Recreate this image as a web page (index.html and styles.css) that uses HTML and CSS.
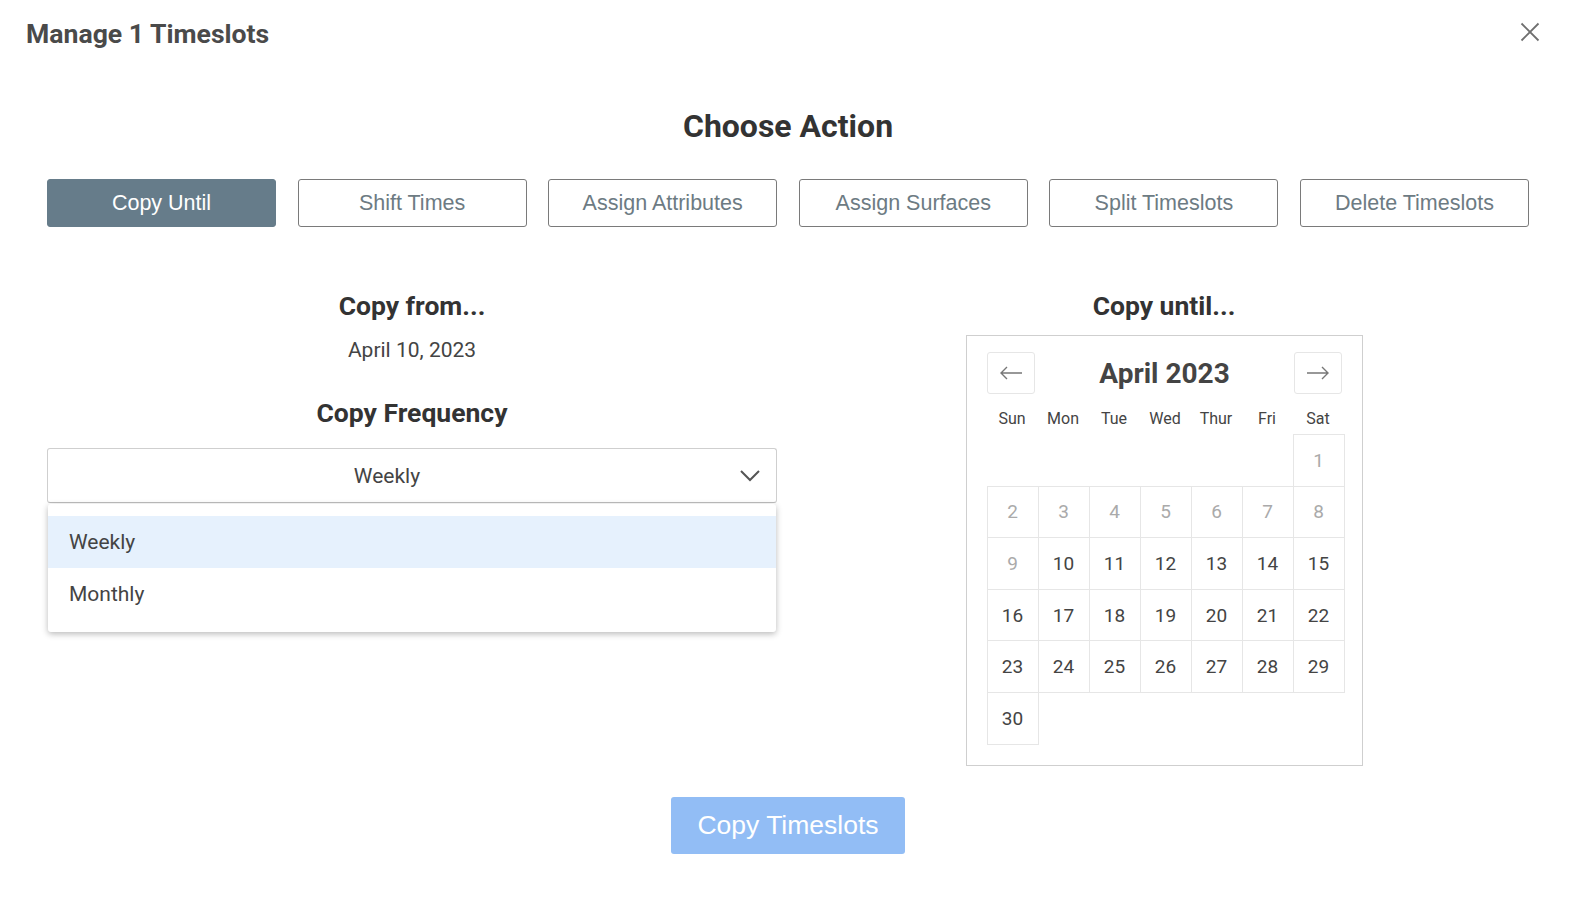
FILE: index.html
```html
<!DOCTYPE html>
<html lang="en">

<head>
  <meta charset="UTF-8" />
  <meta name="viewport" content="width=device-width, initial-scale=1.0" />
  <title>Manage 1 Timeslots</title>
  <link rel="stylesheet" href="styles.css">
</head>

<body>

  <div class="modal">
    <!-- Header -->
    <div class="modal-header">
      <h1>Manage 1 Timeslots</h1>
      <button class="close-btn" aria-label="Close">
        <svg width="20" height="20" viewBox="0 0 20 20">
          <path d="M1.5 1.5 L18.5 18.5 M18.5 1.5 L1.5 18.5" stroke="#6f6f6f" stroke-width="1.8" fill="none" />
        </svg>
      </button>
    </div>

    <h2 class="section-title">Choose Action</h2>

    <!-- Action buttons -->
    <div class="actions">
      <button class="action-btn active">Copy Until</button>
      <button class="action-btn">Shift Times</button>
      <button class="action-btn">Assign Attributes</button>
      <button class="action-btn">Assign Surfaces</button>
      <button class="action-btn">Split Timeslots</button>
      <button class="action-btn">Delete Timeslots</button>
    </div>

    <div class="columns">
      <!-- Left column -->
      <div class="col">
        <h3>Copy from...</h3>
        <p class="from-date">April 10, 2023</p>
        <h3 class="freq-title">Copy Frequency</h3>
        <div class="select-wrap">
          <div class="select">
            <span>Weekly</span>
            <svg class="chevron" width="20" height="12" viewBox="0 0 20 12">
              <path d="M1 1 L10 10 L19 1" stroke="#555" stroke-width="2" fill="none" />
            </svg>
          </div>
          <ul class="menu">
            <li class="selected">Weekly</li>
            <li>Monthly</li>
          </ul>
        </div>
      </div>

      <!-- Right column -->
      <div class="col">
        <h3>Copy until...</h3>
        <div class="calendar">
          <div class="cal-head">
            <button class="nav-btn" aria-label="Previous month">
              <svg width="24" height="14" viewBox="0 0 24 14">
                <path d="M23 7 H2 M8 1 L2 7 L8 13" stroke="#777" stroke-width="1.4" fill="none" />
              </svg>
            </button>
            <span class="month">April 2023</span>
            <button class="nav-btn" aria-label="Next month">
              <svg width="24" height="14" viewBox="0 0 24 14">
                <path d="M1 7 H22 M16 1 L22 7 L16 13" stroke="#777" stroke-width="1.4" fill="none" />
              </svg>
            </button>
          </div>
          <div class="weekdays">
            <span>Sun</span><span>Mon</span><span>Tue</span><span>Wed</span><span>Thur</span><span>Fri</span><span>Sat</span>
          </div>
          <div class="days" id="days"></div>
        </div>
      </div>
    </div>

    <div class="footer">
      <button class="submit-btn">Copy Timeslots</button>
    </div>
  </div>

  <script>
    const days = document.getElementById("days");
    const firstWeekday = 6;
    for (let i = 0; i < firstWeekday; i++) {
      const empty = document.createElement("div");
      empty.className = "blank";
      days.appendChild(empty);
    }
    for (let d = 1; d <= 30; d++) {
      const cell = document.createElement("div");
      cell.className = d < 10 ? "day disabled" : "day";
      cell.textContent = d;
      days.appendChild(cell);
    }
  </script>
</body>

</html>
```

FILE: styles.css
```css
* {
  margin: 0;
  padding: 0;
  box-sizing: border-box;
}

body,
html {
  background-color: #fff;
  font-family: Roboto, "Liberation Sans", sans-serif;
  color: #444;
  overflow: hidden;
}

.modal {
  padding: 0 51px 0 47px;
}

.modal-header {
  display: flex;
  justify-content: space-between;
  align-items: center;
  margin: 0 -11px 0 -21px;
  padding-top: 17px;
  height: 50px;
}

.modal-header h1 {
  font-size: 26.6px;
  font-weight: 700;
  color: #4a4a4a;
  line-height: 30px;
}

.close-btn {
  background: none;
  border: none;
  cursor: pointer;
  width: 20px;
  height: 20px;
  margin-top: -3px;
}

.section-title {
  text-align: center;
  font-size: 32px;
  font-weight: 700;
  color: #333;
  margin-top: 57px;
  line-height: 38px;
}

.actions {
  display: grid;
  grid-template-columns: repeat(6, 1fr);
  gap: 21.6px;
  margin-top: 34px;
}

.action-btn {
  height: 48px;
  background: #fff;
  border: 1px solid #7a7a7a;
  border-radius: 3px;
  font-family: "Liberation Sans", Arial, sans-serif;
  font-size: 21.5px;
  color: #6d7b83;
  cursor: pointer;
}

.action-btn.active {
  background-color: #667c8a;
  border-color: #667c8a;
  color: #fff;
}

.columns {
  display: grid;
  grid-template-columns: 1fr 1fr;
  gap: 22px;
  margin-top: 64px;
}

.col {
  display: flex;
  flex-direction: column;
  align-items: center;
}

.col h3 {
  font-size: 26.5px;
  font-weight: 700;
  color: #333;
  line-height: 30px;
}

.from-date {
  font-size: 21px;
  color: #444;
  margin-top: 17px;
  line-height: 24px;
}

.freq-title {
  margin-top: 36px;
}

.select-wrap {
  position: relative;
  width: 100%;
  margin-top: 20px;
}

.select {
  height: 55px;
  border: 1px solid #cfcfcf;
  border-bottom-color: #bdbdbd;
  border-radius: 3px;
  display: flex;
  align-items: center;
  justify-content: center;
  padding-right: 50px;
  font-size: 21px;
  color: #444;
  position: relative;
}

.chevron {
  position: absolute;
  right: 16px;
  top: 21px;
}

.menu {
  position: absolute;
  top: 56px;
  left: 1px;
  right: 1px;
  list-style: none;
  background: #fff;
  border-radius: 3px;
  padding: 12px 0;
  box-shadow: 0 2px 6px rgba(0, 0, 0, 0.28);
}

.menu li {
  height: 52px;
  display: flex;
  align-items: center;
  padding-left: 21px;
  font-size: 21px;
  color: #444;
}

.menu li.selected {
  background-color: #e6f1fd;
}

.calendar {
  width: 397px;
  margin-top: 14px;
  border: 1px solid #cfcfcf;
  padding: 16px 19px 20px 20px;
}

.cal-head {
  display: flex;
  justify-content: space-between;
  align-items: center;
}

.nav-btn {
  width: 48px;
  height: 42px;
  background: #fff;
  border: 1px solid #e6e6e6;
  border-radius: 3px;
  display: flex;
  align-items: center;
  justify-content: center;
  cursor: pointer;
}

.month {
  font-size: 28px;
  font-weight: 700;
  color: #444;
}

.weekdays {
  display: grid;
  grid-template-columns: repeat(7, 51px);
  margin-top: 14px;
  text-align: center;
  font-size: 16px;
  color: #444;
  line-height: 22px;
}

.days {
  display: grid;
  grid-template-columns: repeat(7, 51px);
  grid-auto-rows: 51.6px;
  margin-top: 4px;
  padding: 1px 0 0 1px;
}

.day {
  border: 1px solid #e6e6e6;
  margin: -1px 0 0 -1px;
  display: flex;
  align-items: center;
  justify-content: center;
  font-size: 19px;
  color: #444;
}

.day.disabled {
  color: #aaa;
}

.footer {
  display: flex;
  justify-content: center;
  margin-top: 31px;
}

.submit-btn {
  width: 234px;
  height: 57px;
  background-color: #92bdf5;
  border: none;
  border-radius: 3px;
  color: #fff;
  font-family: "Liberation Sans", Arial, sans-serif;
  font-size: 26.5px;
  cursor: pointer;
}
```
